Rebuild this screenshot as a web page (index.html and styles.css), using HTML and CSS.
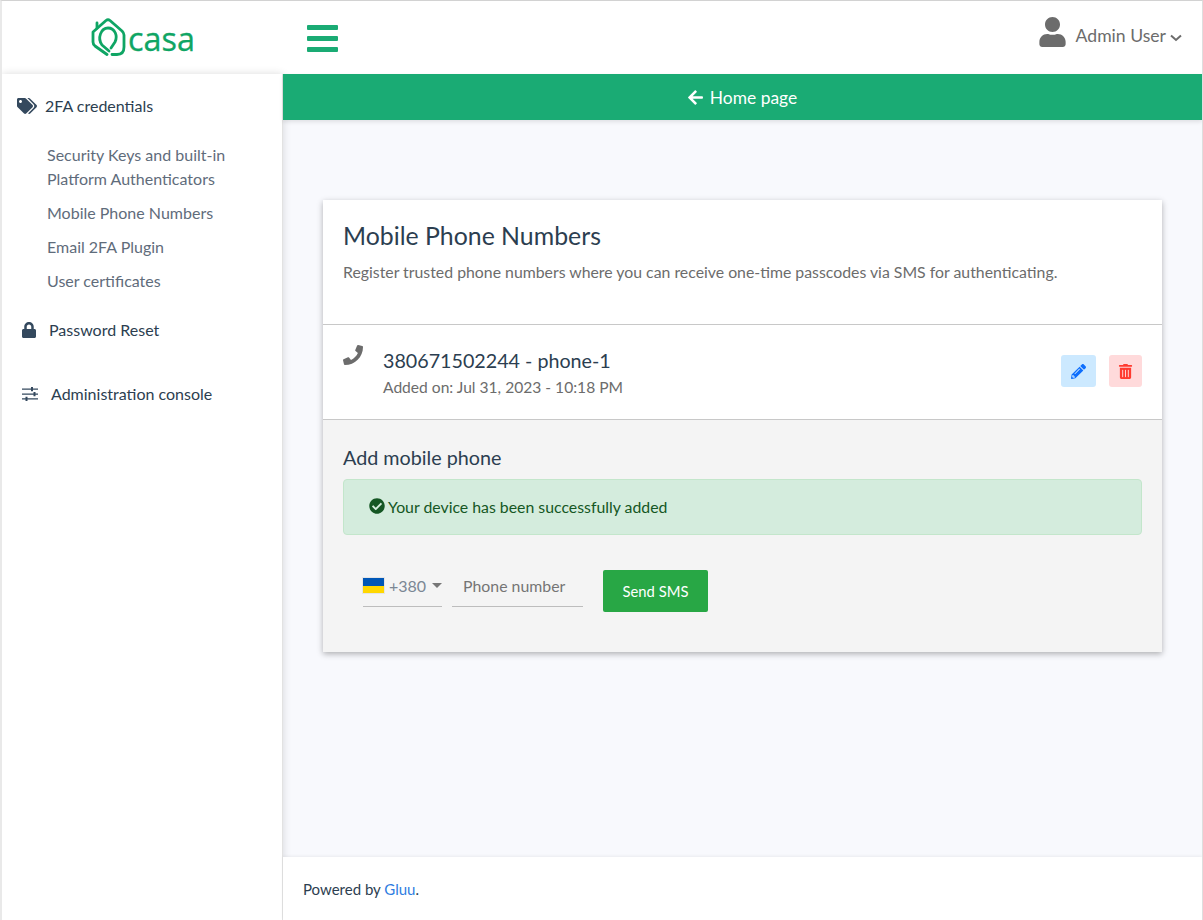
FILE: index.html
```html
<!DOCTYPE html>
<html lang="en">
<head>
<meta charset="UTF-8">
<meta name="viewport" content="width=device-width, initial-scale=1.0">
<title>Casa - Mobile Phone Numbers</title>
<link rel="stylesheet" href="styles.css">
</head>
<body>

<header class="topbar">
    <div class="brand">
        <svg class="brand-logo" viewBox="0 0 36 38" fill="none" stroke="#0fa564" stroke-width="2.8" stroke-linecap="round" stroke-linejoin="round">
            <path d="M16 36.500L4 28Q2 26.500 2 24V14L15 2.500Q17 1 19 2.500L31 13Q33 15 33 17V29Q33 36.500 26 36.500H21"/>
            <path d="M6 5V10"/>
            <path d="M18 33L11 27C6 20 10 10 17 10C24 10 27 18 24 24L20 30"/>
        </svg>
        <span class="brand-name">casa</span>
    </div>
    <button class="menu-toggle" aria-label="Toggle menu"><span></span><span></span><span></span></button>
    <div class="user-menu">
        <svg class="user-icon" viewBox="0 0 448 512"><path d="M224 256c70.700 0 128-57.300 128-128S294.700 0 224 0 96 57.300 96 128s57.300 128 128 128zm89.600 32h-16.700c-22.200 10.200-46.900 16-72.900 16s-50.600-5.800-72.900-16h-16.700C60.200 288 0 348.200 0 422.400V464c0 26.500 21.500 48 48 48h352c26.500 0 48-21.500 48-48v-41.600c0-74.200-60.200-134.400-134.400-134.400z"/></svg>
        <span class="user-name">Admin User</span>
        <svg class="user-caret" viewBox="0 0 12 8" fill="none" stroke="#6c6c6c" stroke-width="2"><path d="M1 1.500l5 4.500 5-4.500"/></svg>
    </div>
</header>

<div class="layout">
    <aside class="sidebar">
        <div class="nav-head nav-head-first">
            <svg class="nav-icon icon-tags" viewBox="0 0 640 512"><path d="M497.941 225.941L286.059 14.059A48 48 0 0 0 252.118 0H48C21.490 0 0 21.490 0 48v204.118a48 48 0 0 0 14.059 33.941l211.882 211.882c18.744 18.745 49.136 18.746 67.882 0l204.118-204.118c18.745-18.745 18.745-49.137 0-67.882zM112 160c-26.510 0-48-21.490-48-48s21.490-48 48-48 48 21.490 48 48-21.490 48-48 48zm513.941 133.823L421.823 497.941c-18.745 18.745-49.137 18.745-67.882 0l-.36-.36L527.640 323.522c16.999-16.999 26.360-39.600 26.360-63.640s-9.362-46.641-26.360-63.640L331.397 0h48.721a48 48 0 0 1 33.941 14.059l211.882 211.882c18.745 18.745 18.745 49.137 0 67.882z"/></svg>
            <a href="#">2FA credentials</a>
        </div>
        <ul class="nav-sub">
            <li><a href="#">Security Keys and built-in Platform Authenticators</a></li>
            <li><a href="#">Mobile Phone Numbers</a></li>
            <li><a href="#">Email 2FA Plugin</a></li>
            <li><a href="#">User certificates</a></li>
        </ul>
        <div class="nav-head nav-head-lock">
            <svg class="nav-icon icon-lock" viewBox="0 0 448 512"><path d="M400 224h-24v-72C376 68.200 307.800 0 224 0S72 68.200 72 152v72H48c-26.500 0-48 21.500-48 48v192c0 26.500 21.500 48 48 48h352c26.500 0 48-21.500 48-48V272c0-26.500-21.500-48-48-48zm-104 0H152v-72c0-39.700 32.300-72 72-72s72 32.300 72 72v72z"/></svg>
            <a href="#">Password Reset</a>
        </div>
        <div class="nav-head nav-head-admin">
            <svg class="nav-icon icon-sliders" viewBox="0 0 16 14"><path d="M0 1.500h16v1.300H0zM0 6.400h16v1.300H0zM0 11.200h16v1.300H0zM9 0h2v4.300H9zM11.500 4.900h2v4.300h-2zM3.500 9.700h2V14h-2z"/></svg>
            <a href="#">Administration console</a>
        </div>
    </aside>

    <div class="main">
        <a class="home-bar" href="#">
            <svg class="home-arrow" viewBox="0 0 448 512"><path d="M257.500 445.100l-22.200 22.200c-9.400 9.400-24.600 9.400-33.900 0L7 273c-9.400-9.400-9.400-24.600 0-33.900L201.400 44.700c9.400-9.400 24.600-9.400 33.900 0l22.200 22.200c9.500 9.500 9.300 25-.4 34.300L136.600 216H424c13.300 0 24 10.700 24 24v32c0 13.300-10.700 24-24 24H136.600l120.500 114.800c9.800 9.300 10 24.800.4 34.300z"/></svg>
            Home page
        </a>

        <div class="content">
            <section class="card">
                <div class="card-head">
                    <h1>Mobile Phone Numbers</h1>
                    <p>Register trusted phone numbers where you can receive one-time passcodes via SMS for authenticating.</p>
                </div>
                <div class="phone-row">
                    <svg class="phone-icon" viewBox="0 0 512 512"><path d="M493.400 24.600l-104-24c-11.300-2.600-22.900 3.300-27.500 13.900l-48 112c-4.200 9.800-1.400 21.300 6.900 28l60.600 49.600c-36 76.700-98.900 140.500-177.200 177.200l-49.600-60.600c-6.800-8.300-18.200-11.100-28-6.900l-112 48C3.900 366.500-2 378.100.6 389.400l24 104C27.100 504.200 36.700 512 48 512c256.100 0 464-207.500 464-464 0-11.200-7.700-20.900-18.600-23.400z"/></svg>
                    <div class="phone-info">
                        <div class="phone-title">380671502244 - phone-1</div>
                        <div class="phone-date">Added on: Jul 31, 2023 - 10:18 PM</div>
                    </div>
                    <div class="phone-actions">
                        <button class="icon-btn btn-edit" aria-label="Edit">
                            <svg viewBox="0 0 512 512"><path d="M497.900 142.100l-46.100 46.100c-4.700 4.700-12.300 4.700-17 0l-111-111c-4.700-4.700-4.700-12.300 0-17l46.100-46.100c18.700-18.700 49.100-18.700 67.900 0l60.100 60.100c18.800 18.700 18.800 49.100 0 67.900zM284.200 99.800L21.600 362.400.4 483.900c-2.900 16.400 11.400 30.600 27.800 27.800l121.500-21.300 262.600-262.600c4.700-4.700 4.700-12.300 0-17l-111-111c-4.800-4.700-12.400-4.700-17.100 0zM124.100 339.900c-5.500-5.500-5.500-14.300 0-19.800l154-154c5.500-5.500 14.300-5.500 19.800 0s5.500 14.300 0 19.800l-154 154c-5.500 5.500-14.300 5.500-19.800 0zM88 424h48v36.300l-64.500 11.300-31.100-31.100L51.700 376H88v48z"/></svg>
                        </button>
                        <button class="icon-btn btn-delete" aria-label="Delete">
                            <svg viewBox="0 0 448 512"><path d="M32 464a48 48 0 0 0 48 48h288a48 48 0 0 0 48-48V128H32zm272-256a16 16 0 0 1 32 0v224a16 16 0 0 1-32 0zm-96 0a16 16 0 0 1 32 0v224a16 16 0 0 1-32 0zm-96 0a16 16 0 0 1 32 0v224a16 16 0 0 1-32 0zM432 32H312l-9.400-18.700A24 24 0 0 0 281.100 0H166.800a23.720 23.720 0 0 0-21.400 13.300L136 32H16A16 16 0 0 0 0 48v32a16 16 0 0 0 16 16h416a16 16 0 0 0 16-16V48a16 16 0 0 0-16-16z"/></svg>
                        </button>
                    </div>
                </div>
                <div class="add-phone">
                    <h2>Add mobile phone</h2>
                    <div class="alert">
                        <svg class="alert-icon" viewBox="0 0 512 512"><path d="M504 256c0 136.967-111.033 248-248 248S8 392.967 8 256 119.033 8 256 8s248 111.033 248 248zM227.314 387.314l184-184c6.248-6.248 6.248-16.379 0-22.627l-22.627-22.627c-6.248-6.249-16.379-6.249-22.628 0L216 308.118l-70.059-70.059c-6.248-6.248-16.379-6.248-22.628 0l-22.627 22.627c-6.248 6.248-6.248 16.379 0 22.627l104 104c6.249 6.250 16.379 6.250 22.628.001z"/></svg>
                        Your device has been successfully added
                    </div>
                    <div class="phone-form">
                        <div class="country-select">
                            <span class="flag"></span>
                            <span class="dial-code">+380</span>
                            <span class="select-caret"></span>
                        </div>
                        <div class="phone-input">Phone number</div>
                        <button class="send-btn">Send SMS</button>
                    </div>
                </div>
            </section>
        </div>

        <footer class="footer">Powered by <a href="#">Gluu</a>.</footer>
    </div>
</div>

</body>
</html>
```

FILE: styles.css
```css
* {
    box-sizing: border-box;
}

html, body {
    height: 100%;
}

body {
    margin: 0;
    font-family: Lato, "Open Sans", sans-serif;
    color: #2c3e50;
    background-color: #fff;
    border-top: 1px solid #d2d2d2;
    border-left: 2px solid #e9e9e9;
    border-right: 1px solid #dedede;
    overflow: hidden;
    display: flex;
    flex-direction: column;
}

a {
    color: inherit;
    text-decoration: none;
}

/* Top bar */
.topbar {
    height: 73px;
    flex: none;
    display: flex;
    align-items: center;
    background-color: #fff;
}

.brand {
    width: 281px;
    display: flex;
    align-items: center;
    padding: 0 0 0 89px;
    height: 100%;
}

.brand-logo {
    width: 36px;
    height: 38px;
    margin-top: -2px;
}

.brand-name {
    font-family: "Open Sans", sans-serif;
    font-size: 32.4px;
    color: #0fa564;
    line-height: 1;
    margin-left: 1px;
    margin-top: 2px;
    -webkit-text-stroke: 0.3px #0fa564;
}

.menu-toggle {
    margin-left: 24px;
    width: 31px;
    padding: 0;
    border: 0;
    background: none;
    display: flex;
    flex-direction: column;
    gap: 6px;
    margin-top: 2px;
}

.menu-toggle span {
    display: block;
    height: 5px;
    border-radius: 1px;
    background-color: #1aab74;
}

.user-menu {
    margin-left: auto;
    display: flex;
    align-items: center;
    padding-right: 20px;
    margin-top: -4px;
    color: #6c6c6c;
}

.user-icon {
    width: 27px;
    height: 30px;
    fill: #6c6c6c;
    margin-right: 10px;
    margin-top: -8px;
}

.user-name {
    font-size: 17.6px;
}

.user-caret {
    width: 12px;
    height: 8px;
    margin-left: 4px;
    margin-top: 4px;
}

/* Sidebar and main */
.layout {
    flex: 1;
    display: flex;
    min-height: 0;
}

.sidebar {
    width: 281px;
    flex: none;
    background-color: #fff;
    border-right: 1px solid #e2e2e2;
    box-shadow: 0 0 8px rgba(0, 0, 0, 0.14);
    z-index: 2;
    font-size: 16px;
}

.nav-head {
    display: flex;
    align-items: center;
    line-height: 24px;
}

.nav-head-first {
    margin-top: 20px;
    padding-left: 15px;
}

.nav-head-lock {
    margin-top: 25px;
    padding-left: 20px;
}

.nav-head-admin {
    margin-top: 40px;
    padding-left: 20px;
}

.nav-icon {
    fill: #34495e;
    flex: none;
}

.icon-tags {
    width: 20px;
    height: 16px;
    margin-right: 8px;
}

.icon-lock {
    width: 14px;
    height: 16px;
    margin-right: 13px;
}

.icon-sliders {
    width: 16px;
    height: 14px;
    margin-right: 13px;
}

.nav-sub {
    list-style: none;
    margin: 25px 0 0;
    padding: 0 40px 0 45px;
    color: #5f6c7b;
}

.nav-sub li {
    line-height: 24px;
    margin-bottom: 10px;
}

.main {
    flex: 1;
    display: flex;
    flex-direction: column;
    min-width: 0;
    background-color: #f8f9fd;
}

.home-bar {
    position: relative;
    z-index: 3;
    height: 46px;
    flex: none;
    background-color: #1aab74;
    color: #fff;
    font-size: 17.4px;
    display: flex;
    align-items: center;
    justify-content: center;
    gap: 7px;
    box-shadow: 0 2px 4px rgba(0, 0, 0, 0.1);
}

.home-arrow {
    width: 15px;
    height: 17px;
    fill: #fff;
}

.content {
    flex: 1;
    padding: 80px 40px 0;
}

/* Card */
.card {
    background-color: #fff;
    box-shadow: 0 2px 6px rgba(0, 0, 0, 0.3);
}

.card-head {
    height: 125px;
    padding: 19px 20px 0;
    border-bottom: 1px solid #c8c8c8;
}

.card-head h1 {
    margin: 0;
    font-size: 24.85px;
    font-weight: 400;
    line-height: 32px;
    color: #2c3e50;
}

.card-head p {
    margin: 10px 0 0;
    font-size: 15.84px;
    line-height: 22px;
    color: #6c6c6c;
}

.phone-row {
    height: 95px;
    padding: 0 20px;
    display: flex;
    border-bottom: 1px solid #c8c8c8;
}

.phone-icon {
    width: 20px;
    height: 20px;
    fill: #6c6c6c;
    margin-top: 20px;
    flex: none;
}

.phone-info {
    margin-left: 20px;
    padding-top: 22px;
}

.phone-title {
    font-size: 19.7px;
    line-height: 28px;
    color: #2c3e50;
}

.phone-date {
    margin-top: 1px;
    font-size: 15.6px;
    line-height: 22px;
    color: #6c6c6c;
}

.phone-actions {
    margin-left: auto;
    display: flex;
    gap: 13px;
    padding-top: 30px;
}

.icon-btn {
    height: 32px;
    border: 0;
    border-radius: 3px;
    padding: 0;
    display: flex;
    align-items: center;
    justify-content: center;
}

.icon-btn svg {
    width: 15px;
    height: 15px;
}

.btn-edit {
    width: 35px;
    background-color: #cce9ff;
}

.btn-edit svg {
    fill: #0d6efd;
}

.btn-delete {
    width: 33px;
    background-color: #ffdadb;
}

.btn-delete svg {
    fill: #ff3b30;
}

/* Add phone */
.add-phone {
    height: 232px;
    padding: 24px 20px 0;
    background-color: #f4f4f4;
}

.add-phone h2 {
    margin: 0;
    font-size: 19.75px;
    font-weight: 400;
    line-height: 28px;
    color: #2c3e50;
}

.alert {
    margin-top: 7px;
    height: 56px;
    padding: 0 25px 2px;
    display: flex;
    align-items: center;
    font-size: 15.83px;
    color: #155724;
    background-color: #d4ecdd;
    border: 1px solid #c3e6cb;
    border-radius: 4px;
}

.alert-icon {
    width: 16px;
    height: 16px;
    fill: #155724;
    margin-right: 3px;
}

.phone-form {
    margin-top: 35px;
    padding-left: 20px;
    display: flex;
    align-items: flex-start;
}

.country-select {
    width: 79px;
    height: 37px;
    display: flex;
    align-items: center;
    padding-bottom: 6px;
    border-bottom: 1px solid #bdbdbd;
    color: #7b8794;
    font-size: 16px;
}

.flag {
    width: 21px;
    height: 15px;
    background: linear-gradient(#0057b7 50%, #ffd700 50%);
    box-shadow: 0 0 0 1px rgba(0, 0, 0, 0.06);
    margin-right: 5px;
}

.select-caret {
    margin-left: 6px;
    border-left: 5px solid transparent;
    border-right: 5px solid transparent;
    border-top: 5px solid #777;
}

.phone-input {
    margin-left: 10px;
    width: 131px;
    height: 37px;
    padding: 4px 0 0 11px;
    line-height: 24px;
    border-bottom: 1px solid #bdbdbd;
    color: #757575;
    font-size: 15.85px;
}

.send-btn {
    margin-left: 20px;
    width: 105px;
    height: 42px;
    border: 0;
    border-radius: 2px;
    background-color: #28a745;
    color: #fff;
    font-family: inherit;
    font-size: 14.8px;
}

/* Footer */
.footer {
    position: relative;
    z-index: 3;
    height: 63px;
    flex: none;
    padding-left: 20px;
    display: flex;
    align-items: center;
    white-space: pre;
    font-size: 15px;
    color: #2c3e50;
    background-color: #fff;
    box-shadow: 0 -1px 3px rgba(0, 0, 0, 0.06);
}

.footer a {
    color: #2f7de1;
}
```
